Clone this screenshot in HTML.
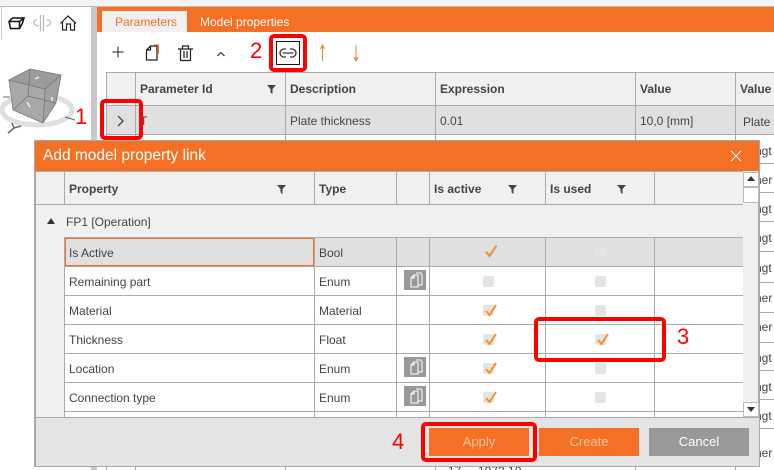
<!DOCTYPE html>
<html><head><meta charset="utf-8"><style>
*{box-sizing:border-box}
html,body{margin:0;padding:0}
html{overflow:hidden;width:774px;height:470px}
body{width:774px;height:470px;position:relative;overflow:hidden;background:#fff;font:12px "Liberation Sans",sans-serif;color:#444}
div{position:absolute}
.t{white-space:nowrap;line-height:16px}
.b{font-weight:bold}
.h{background:#aaa;height:1px}
.v{background:#aaa;width:1px}
.red{border:4px solid #f00;border-radius:5px}
.n{color:#f00;font-size:22px;line-height:24px}
.ib{left:404px;width:22px;height:20px;background:#999}
.btn{top:428px;width:100px;height:28px;color:#eee;text-align:center;line-height:28px;font-size:13px}
.clip{overflow:hidden}
svg{position:absolute;overflow:visible}
</style></head><body>
<svg width="0" height="0"><defs>
<g id="ck"><rect x="-5.5" y="-5.5" width="11" height="11" rx="2" fill="#e4e4e4"/></g>
<g id="cc"><rect x="-5.5" y="-5.5" width="11" height="11" rx="2" fill="#e4e4e4"/><path d="M-2.500 0.500L1 4.500 7.500-5.500" fill="none" stroke="#f7901e" stroke-width="2"/></g>
<g id="doc"><path d="M5 7l3-3h4v12H5zM8 4v3H5M10 2h5l1 2v10h-4" fill="none" stroke="#fff" stroke-width="1"/></g>
<path id="fl" d="M0 0h9L5.500 4v5L3.500 7.500V4z" fill="#444"/>
</defs></svg>

<div style="left:0;top:0;width:774px;height:6px;background:#f3f3f3"></div>
<div style="left:0;top:6px;width:774px;height:1px;background:#bbb"></div>
<div style="left:91px;top:7px;width:6px;height:463px;background:#c8c8c8"></div>
<div style="left:1px;top:7px;width:1px;height:32px;background:#ccc"></div>

<svg style="left:0;top:0" width="91" height="40" fill="none">
<path d="M9 21.500l3.500-3.500H24l-1.500 5-3 5.500h-9zM9 21.500l1.500 7M9 21.500h10.500l4.500-3.500M19.500 21.500v7" stroke="#111" stroke-width="1.500"/>
<path d="M40.500 15v16M43.500 15v16M37 19.500c-5 1-4 6 2 6.500M47 19.500c5 1 4.500 6-1 6.500" stroke="#bbb" stroke-width="1.300"/>
<path d="M60.500 23.500L68 16l8 7.500M62.500 22v8h4v-6h4v6h4v-8" stroke="#222" stroke-width="1.200"/>
</svg>
<svg style="left:0;top:60px" width="91" height="80" fill="none">
<ellipse cx="37" cy="50" rx="35" ry="15" stroke="#e0e0e0" stroke-width="5"/>
<path d="M9 20L30 9l31 6-16 14z" fill="#9c9c9c"/>
<path d="M9 20l4 30 30 13 2-34z" fill="#a8a8a8"/>
<path d="M45 29l16-14-5 28-13 20z" fill="#a0a0a0"/>
<path d="M9 20L30 9l31 6-16 14zM9 20l4 30 30 13 13-20 5-28M45 29l-2 34M30 9l-2 27M13 50l15-14 28 7" stroke="#777" stroke-width=".8"/>
<path d="M35 19l4-2M27 42l3 5M52 37v4" stroke="#fff" stroke-width="1.200"/>
<path d="M3 37h7M65 57l10 3" stroke="#666"/>
<path d="M8 73l6-5 7-2M14 68l-2-5" stroke="#666" stroke-width="1.500"/>
</svg>

<!-- main -->
<div style="left:97px;top:7px;width:677px;height:25px;background:#f47024"></div>
<div style="left:102px;top:11px;width:85px;height:21px;background:#f0f0f0"></div>
<div class="t" style="left:115px;top:14px;color:#f47024">Parameters</div>
<div class="t" style="left:200px;top:14px;color:#fff">Model properties</div>

<svg style="left:97px;top:32px" width="320" height="40" fill="none" stroke="#222">
<path d="M21 14.500v11M15.500 20h11"/>
<path d="M49.500 18l4-4h6.500v14H49.500zM53.500 14v4h-4" stroke-width="1.300"/>
<path d="M57 13h4.500v9" stroke="#f47024"/>
<path d="M81 17h15M83.500 17v11.500h10V17M85.500 17v-3h6v3M87 19v7M90 19v7" stroke-width="1.200"/>
<path d="M120.500 24l3.500-3.500 3.500 3.500" stroke-width="1.100"/>
<path d="M225.500 29V13M223.500 17l2-4 2 4M259 13v16M257 25l2 4 2-4" stroke="#f47024" stroke-width=".9"/>
</svg>
<div style="left:276px;top:41px;width:24px;height:24px;border:1px solid #111"></div>
<svg style="left:276px;top:41px" width="24" height="24" fill="none" stroke="#333" stroke-width="1.300"><path d="M10 8H8a4 4 0 0 0 0 8h2M14 8h2a4 4 0 0 1 0 8h-2M7 12h10"/></svg>

<!-- back table -->
<div style="left:106px;top:72px;width:668px;height:33px;background:#f0f0f0"></div>
<div style="left:106px;top:106px;width:668px;height:28px;background:#e0e0e0"></div>
<div class="h" style="left:106px;top:72px;width:668px"></div>
<div class="h" style="left:106px;top:105px;width:668px"></div>
<div class="h" style="left:106px;top:134px;width:668px"></div>
<div class="v" style="left:106px;top:72px;height:398px"></div>
<div class="v" style="left:135px;top:72px;height:398px"></div>
<div class="v" style="left:285px;top:72px;height:398px"></div>
<div class="v" style="left:435px;top:72px;height:398px"></div>
<div class="v" style="left:635px;top:72px;height:398px"></div>
<div class="v" style="left:735px;top:72px;height:398px"></div>
<div class="t b" style="left:140px;top:81px">Parameter Id</div>
<div class="t b" style="left:290px;top:81px">Description</div>
<div class="t b" style="left:440px;top:81px">Expression</div>
<div class="t b" style="left:640px;top:81px">Value</div>
<div class="t b clip" style="left:740px;top:81px;width:34px">Value type</div>
<svg style="left:267px;top:85px" width="9" height="9"><use href="#fl"/></svg>
<svg style="left:117px;top:115px" width="8" height="12" fill="none"><path d="M1 1l5 5-5 5" stroke="#444" stroke-width="1.300"/></svg>
<div class="t" style="left:140px;top:113px">T</div>
<div class="t" style="left:290px;top:113px">Plate thickness</div>
<div class="t" style="left:440px;top:113px">0.01</div>
<div class="t" style="left:640px;top:113px">10,0 [mm]</div>
<div class="t clip" style="left:743px;top:114px;width:31px">Plate thickness</div>

<!-- right fragments -->
<div class="h" style="left:735px;top:163px;width:39px"></div>
<div class="h" style="left:735px;top:192px;width:39px"></div>
<div class="h" style="left:735px;top:221px;width:39px"></div>
<div class="h" style="left:735px;top:251px;width:39px"></div>
<div class="h" style="left:735px;top:282px;width:39px"></div>
<div class="h" style="left:735px;top:312px;width:39px"></div>
<div class="h" style="left:735px;top:342px;width:39px"></div>
<div class="h" style="left:735px;top:370px;width:39px"></div>
<div class="h" style="left:735px;top:399px;width:39px"></div>
<div class="h" style="left:735px;top:428px;width:39px"></div>
<div class="t clip" style="left:755px;top:143px;width:19px">ngt</div>
<div class="t clip" style="left:755px;top:172px;width:19px">her</div>
<div class="t clip" style="left:755px;top:201px;width:19px">ngt</div>
<div class="t clip" style="left:755px;top:230px;width:19px">ngt</div>
<div class="t clip" style="left:755px;top:260px;width:19px">ngt</div>
<div class="t clip" style="left:755px;top:290px;width:19px">her</div>
<div class="t clip" style="left:755px;top:319px;width:19px">her</div>
<div class="t clip" style="left:755px;top:350px;width:19px">ngt</div>
<div class="t clip" style="left:755px;top:379px;width:19px">ngt</div>
<div class="t clip" style="left:755px;top:408px;width:19px">ngt</div>
<div class="t clip" style="left:755px;top:445px;width:19px">her</div>
<div class="clip" style="left:440px;top:466px;width:100px;height:4px"><div class="t" style="left:8px;top:-3px">17</div><div class="t" style="left:38px;top:-3px">1972.10</div></div>

<!-- dialog -->
<div style="left:34px;top:140px;width:726px;height:327px;background:#f0f0f0;border:1px solid #a9a9a9;border-left-width:2px;border-right-width:2px"></div>
<div style="left:35px;top:141px;width:724px;height:30px;background:#f47024"></div>
<div class="t" style="left:43px;top:148px;color:#fff;font-size:15.500px">Add model property link</div>
<svg style="left:730px;top:150px" width="12" height="12"><path d="M1 1l10 10M11 1L1 11" stroke="#fff" fill="none"/></svg>

<div style="left:64px;top:237px;width:679px;height:180px;background:#fff"></div>
<div style="left:64px;top:238px;width:679px;height:28px;background:#e0e0e0"></div>
<div class="h" style="left:36px;top:171px;width:707px"></div>
<div class="h" style="left:36px;top:204px;width:707px"></div>
<div class="h" style="left:64px;top:237px;width:679px"></div>
<div class="h" style="left:64px;top:266px;width:679px"></div>
<div class="h" style="left:64px;top:295px;width:679px"></div>
<div class="h" style="left:64px;top:324px;width:679px"></div>
<div class="h" style="left:64px;top:353px;width:679px"></div>
<div class="h" style="left:64px;top:382px;width:679px"></div>
<div class="h" style="left:64px;top:411px;width:679px"></div>
<div class="v" style="left:64px;top:171px;height:33px"></div>
<div class="v" style="left:64px;top:237px;height:180px"></div>
<div class="v" style="left:314px;top:171px;height:33px"></div>
<div class="v" style="left:314px;top:237px;height:180px"></div>
<div class="v" style="left:396px;top:171px;height:33px"></div>
<div class="v" style="left:396px;top:237px;height:180px"></div>
<div class="v" style="left:429px;top:171px;height:33px"></div>
<div class="v" style="left:429px;top:237px;height:180px"></div>
<div class="v" style="left:545px;top:171px;height:33px"></div>
<div class="v" style="left:545px;top:237px;height:180px"></div>
<div class="v" style="left:654px;top:171px;height:33px"></div>
<div class="v" style="left:654px;top:237px;height:180px"></div>
<div style="left:65px;top:238px;width:249px;height:28px;border:1px solid #f47024"></div>

<div class="t b" style="left:69px;top:181px">Property</div>
<div class="t b" style="left:319px;top:181px">Type</div>
<div class="t b" style="left:434px;top:181px">Is active</div>
<div class="t b" style="left:550px;top:181px">Is used</div>
<svg style="left:277px;top:185px" width="9" height="9"><use href="#fl"/></svg>
<svg style="left:508px;top:185px" width="9" height="9"><use href="#fl"/></svg>
<svg style="left:617px;top:185px" width="9" height="9"><use href="#fl"/></svg>
<svg style="left:47px;top:218px" width="9" height="7"><path d="M0 6L4 0l4 6z" fill="#333"/></svg>
<div class="t" style="left:66px;top:214px">FP1 [Operation]</div>

<div class="t" style="left:69px;top:245px">Is Active</div><div class="t" style="left:319px;top:245px">Bool</div>
<div class="t" style="left:69px;top:274px">Remaining part</div><div class="t" style="left:319px;top:274px">Enum</div>
<div class="t" style="left:69px;top:303px">Material</div><div class="t" style="left:319px;top:303px">Material</div>
<div class="t" style="left:69px;top:332px">Thickness</div><div class="t" style="left:319px;top:332px">Float</div>
<div class="t" style="left:69px;top:361px">Location</div><div class="t" style="left:319px;top:361px">Enum</div>
<div class="t" style="left:69px;top:390px">Connection type</div><div class="t" style="left:319px;top:390px">Enum</div>

<div class="ib" style="top:270px"><svg style="left:2px;top:1px" width="18" height="18"><use href="#doc"/></svg></div>
<div class="ib" style="top:357px"><svg style="left:2px;top:1px" width="18" height="18"><use href="#doc"/></svg></div>
<div class="ib" style="top:386px"><svg style="left:2px;top:1px" width="18" height="18"><use href="#doc"/></svg></div>

<svg style="left:0;top:0" width="774" height="470">
<path d="M486 251.500L489.500 256l7-10.500" fill="none" stroke="#f7901e" stroke-width="2"/>
<rect x="595" y="246.500" width="11" height="11" rx="2" fill="#e4e4e4"/>
<use href="#ck" x="488.500" y="281.500"/><use href="#cc" x="488.500" y="310.500"/><use href="#cc" x="488.500" y="339.500"/><use href="#cc" x="488.500" y="368.500"/><use href="#cc" x="488.500" y="397.500"/>
<use href="#ck" x="600.500" y="281.500"/><use href="#ck" x="600.500" y="310.500"/><use href="#cc" x="600.500" y="339.500"/><use href="#ck" x="600.500" y="368.500"/><use href="#ck" x="600.500" y="397.500"/>
</svg>

<!-- scrollbar -->
<div style="left:743px;top:172px;width:16px;height:15px;background:#fff;border:1px solid #bbb"></div>
<svg style="left:747px;top:176px" width="9" height="6"><path d="M0 5L4 0l4 5z" fill="#333"/></svg>
<div style="left:743px;top:187px;width:16px;height:16px;background:#fff;border:1px solid #bbb"></div>
<div style="left:743px;top:402px;width:16px;height:15px;background:#fff;border:1px solid #bbb"></div>
<svg style="left:747px;top:407px" width="9" height="6"><path d="M0 0l4 5 4-5z" fill="#333"/></svg>

<!-- footer -->
<div style="left:36px;top:417px;width:723px;height:49px;background:#e4e4e4;border-top:1px solid #aaa"></div>
<div class="btn" style="left:429px;background:#f47024;color:#f3c3a3">Apply</div>
<div class="btn" style="left:539px;background:#f47024;color:#f3c3a3">Create</div>
<div class="btn" style="left:649px;background:#999;color:#fff">Cancel</div>

<!-- annotations -->
<div class="red" style="left:100px;top:99px;width:43px;height:41px"></div>
<div class="red" style="left:269px;top:34px;width:38px;height:38px"></div>
<div class="red" style="left:534px;top:317px;width:132px;height:45px"></div>
<div class="red" style="left:421px;top:422px;width:116px;height:40px"></div>
<div class="t n" style="left:75px;top:105px">1</div>
<div class="t n" style="left:250px;top:39px">2</div>
<div class="t n" style="left:677px;top:325px">3</div>
<div class="t n" style="left:392px;top:430px">4</div>
</body></html>
